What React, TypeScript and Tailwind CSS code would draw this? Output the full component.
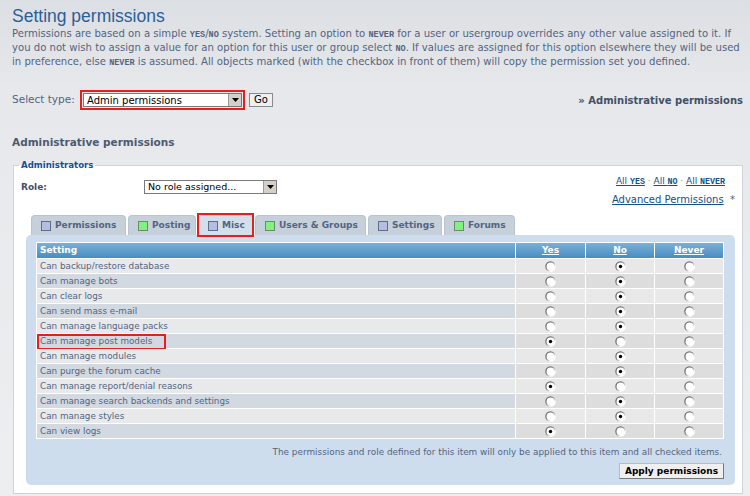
import React from "react";

const Sc = ({ children, size = "text-[8.5px]" }: { children: React.ReactNode; size?: string }) => (
  <span className={`[font-family:'Liberation_Mono',monospace] font-bold leading-none ${size}`}>{children}</span>
);

const Radio = ({ checked }: { checked: boolean }) => (
  <svg width="11" height="11" viewBox="0 0 11 11">
    <circle cx="5.5" cy="5.5" r="4.6" fill="#ffffff" stroke="url(#rg)" strokeWidth="1.3" />
    {checked && <circle cx="5.5" cy="5.5" r="1.7" fill="#000000" />}
  </svg>
);

const Arrow = () => (
  <div className="w-[13px] h-full bg-[#d4d0c8] border-l border-[#9a9a9a] flex items-center justify-center">
    <svg width="7" height="4" viewBox="0 0 7 4">
      <path d="M0 0 H7 L3.5 4 Z" fill="#000" />
    </svg>
  </div>
);

const rows: [string, number][] = [
  ["Can backup/restore database", 1],
  ["Can manage bots", 1],
  ["Can clear logs", 1],
  ["Can send mass e-mail", 1],
  ["Can manage language packs", 1],
  ["Can manage post models", 0],
  ["Can manage modules", 1],
  ["Can purge the forum cache", 1],
  ["Can manage report/denial reasons", 0],
  ["Can manage search backends and settings", 1],
  ["Can manage styles", 1],
  ["Can view logs", 0],
];

const tabs: { label: string; green: boolean; w: string; active?: boolean }[] = [
  { label: "Permissions", green: false, w: "w-[95px]" },
  { label: "Posting", green: true, w: "w-[68px]" },
  { label: "Misc", green: false, w: "w-[55px]", active: true },
  { label: "Users & Groups", green: true, w: "w-[111px]" },
  { label: "Settings", green: false, w: "w-[74px]" },
  { label: "Forums", green: true, w: "w-[71px]" },
];

export default function App() {
  return (
    <div className="w-[750px] h-[496px] overflow-hidden bg-[linear-gradient(to_bottom,#dcdfe3_0px,#e6e8eb_90px,#eceef0_100%)] [font-family:'DejaVu_Sans',Verdana,sans-serif] text-[#536482]">
      <svg width="0" height="0" className="absolute">
        <defs>
          <linearGradient id="rg" x1="0" y1="0" x2="1" y2="1">
            <stop offset="0" stopColor="#555555" />
            <stop offset="0.45" stopColor="#8a8a8a" />
            <stop offset="0.75" stopColor="#ffffff" />
            <stop offset="1" stopColor="#ffffff" />
          </linearGradient>
        </defs>
      </svg>
      <div className="pl-[12px] pr-[7px]">
        <h1 className="h-[27px] pt-[5px] leading-[23px] text-[17.5px] [font-family:'Liberation_Sans',Arial,sans-serif] text-[#2b5f97]">
          Setting permissions
        </h1>
        <div className="h-[42px] text-[10.1px] leading-[14px] whitespace-nowrap">
          <div className="h-[14px]">
            Permissions are based on a simple <Sc>YES</Sc>/<Sc>NO</Sc> system. Setting an option to <Sc>NEVER</Sc> for a user or usergroup overrides any other value assigned to it. If
          </div>
          <div className="h-[14px]">
            you do not wish to assign a value for an option for this user or group select <Sc>NO</Sc>. If values are assigned for this option elsewhere they will be used
          </div>
          <div className="h-[14px]">
            in preference, else <Sc>NEVER</Sc> is assumed. All objects marked (with the checkbox in front of them) will copy the permission set you defined.
          </div>
        </div>

        <div className="mt-[21px] h-[20px] flex items-center justify-between">
          <div className="flex items-center">
            <span className="w-[68px] text-[10.5px] whitespace-nowrap">Select type:</span>
            <div className="w-[165px] h-[20px] border-2 border-[#e3201b] p-[1px]">
              <div className="h-full bg-white border border-[#7a7a7a] flex items-stretch">
                <span className="flex-1 pl-[3px] text-[10px] leading-[14px] text-black">Admin permissions</span>
                <Arrow />
              </div>
            </div>
            <div className="ml-[4px] w-[24px] h-[14px] border border-[#8a8a8a] bg-[#efefef] text-[10px] leading-[12px] text-black flex items-center justify-center">
              Go
            </div>
          </div>
          <span className="font-bold text-[10px] text-[#425067] whitespace-nowrap">» Administrative permissions</span>
        </div>

        <h2 className="mt-[24px] h-[16px] leading-[16px] font-bold text-[10.5px] text-[#4c5a72]">Administrative permissions</h2>

        <fieldset className="mt-[8px] ml-[1px] h-[336px] border border-[#cfd3d8] bg-white pl-[5px] pr-[7px] pb-[7px]">
          <legend className="px-[2px] font-bold text-[8.6px] leading-[14px] text-[#115098]">Administrators</legend>
          <div className="h-[43px] flex justify-between">
            <div className="pt-[8px] pl-[2px] flex items-start">
              <span className="w-[123px] h-[14px] leading-[14px] font-bold text-[9px] text-[#425067]">Role:</span>
              <div className="w-[133px] h-[14px] bg-white border border-[#7a7a7a] flex items-stretch">
                <span className="flex-1 pl-[3px] text-[9.5px] leading-[12px] text-black whitespace-nowrap">No role assigned...</span>
                <Arrow />
              </div>
            </div>
            <div className="pt-[2px] flex flex-col items-end text-[#105289]">
              <div className="h-[14px] leading-[14px] text-[9px] mr-[10px] whitespace-nowrap">
                <span className="underline">All <Sc size="text-[8.3px]">YES</Sc></span>
                <span className="text-[#8f8f8f]"> · </span>
                <span className="underline">All <Sc size="text-[8.3px]">NO</Sc></span>
                <span className="text-[#8f8f8f]"> · </span>
                <span className="underline">All <Sc size="text-[8.3px]">NEVER</Sc></span>
              </div>
              <div className="mt-[5px] h-[14px] leading-[14px] text-[10px] whitespace-nowrap">
                <span className="underline">Advanced Permissions</span>
                <span className="text-[#536482]"> &nbsp;*</span>
              </div>
            </div>
          </div>

          <div className="ml-[12px] h-[20px] flex items-end gap-[2px]">
            {tabs.map((t) => (
              <div
                key={t.label}
                className={`relative ${t.w} h-[20px] rounded-t-[4px] border border-b-0 ${
                  t.active ? "bg-[#d3e0ec] border-[#c0ccd8]" : "bg-[#c6d0db] border-[#b9c4d0]"
                } pl-[9px] flex items-center gap-[4px]`}
              >
                <span
                  className={`w-[10px] h-[10px] border ${
                    t.green ? "bg-[#7ff27f] border-[#6d8a6d]" : "bg-[#b6bde2] border-[#5f6d8c]"
                  }`}
                />
                <span className="font-bold text-[9px] text-[#536482] whitespace-nowrap">{t.label}</span>
                {t.active && (
                  <span className="absolute left-[-2px] right-[-2px] top-[-3px] bottom-[-2px] border-2 border-[#e3201b]" />
                )}
              </div>
            ))}
          </div>

          <div className="ml-[7px] rounded-[5px] bg-[#cedded] pt-[7px] pl-[10px] pr-[11px] pb-[6px]">
            <div className="grid grid-cols-[478px_69px_68px_68px] gap-px p-px bg-white">
              <div className="h-[15px] bg-[linear-gradient(to_bottom,#7ab0d8,#4a8cbf)] pl-[3px] text-[9px] leading-[15px] font-bold text-white">
                Setting
              </div>
              {["Yes", "No", "Never"].map((h) => (
                <div
                  key={h}
                  className="h-[15px] bg-[linear-gradient(to_bottom,#7ab0d8,#4a8cbf)] text-center text-[9px] leading-[15px] font-bold text-white underline"
                >
                  {h}
                </div>
              ))}
              {rows.map(([label, v], i) => {
                const even = i % 2 === 1;
                return (
                  <React.Fragment key={label}>
                    <div
                      className={`relative h-[14px] pl-[3px] text-[8.8px] leading-[14px] whitespace-nowrap ${
                        even ? "bg-[#d2d9e1]" : "bg-[#e8e9eb]"
                      }`}
                    >
                      {label}
                      {i === 5 && (
                        <span className="absolute left-0 top-0 w-[129px] h-[16px] border-2 border-[#e3201b]" />
                      )}
                    </div>
                    {[0, 1, 2].map((c) => (
                      <div
                        key={c}
                        className={`h-[14px] flex items-center justify-center ${even ? "bg-[#dddddd]" : "bg-[#e8e8e8]"}`}
                      >
                        <Radio checked={v === c} />
                      </div>
                    ))}
                  </React.Fragment>
                );
              })}
            </div>
            <div className="mt-[6px] h-[14px] leading-[14px] pr-[2px] text-right text-[8.9px] whitespace-nowrap">
              The permissions and role defined for this item will only be applied to this item and all checked items.
            </div>
            <div className="mt-[4px] flex justify-end">
              <div className="w-[105px] h-[16px] border border-[#777] border-t-[#bbb] border-l-[#bbb] bg-[#efefef] text-center text-[9px] leading-[14px] font-bold text-black whitespace-nowrap">
                Apply permissions
              </div>
            </div>
          </div>
        </fieldset>
      </div>
    </div>
  );
}
